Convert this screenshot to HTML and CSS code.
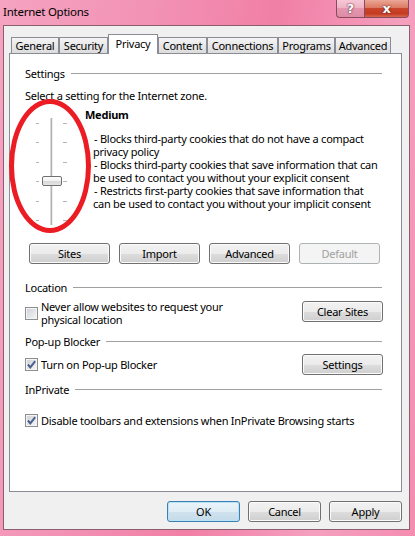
FILE: index.html
```html
<!DOCTYPE html>
<html lang="en">

<head>
    <meta charset="UTF-8">
    <meta name="viewport" content="width=device-width, initial-scale=1.0">
    <title>Internet Options</title>
    <link rel="stylesheet" href="styles.css">
</head>

<body>

<div class="window">
    <div class="titlebar">
        <span class="title">Internet Options</span>
        <div class="caption-buttons">
            <span class="cap-btn cap-help">?</span>
            <span class="cap-btn cap-close">x</span>
        </div>
    </div>

    <div class="client">
        <div class="tabs">
            <span class="tab tab-general">General</span>
            <span class="tab tab-security">Security</span>
            <span class="tab tab-privacy active">Privacy</span>
            <span class="tab tab-content">Content</span>
            <span class="tab tab-connections">Connections</span>
            <span class="tab tab-programs">Programs</span>
            <span class="tab tab-advanced">Advanced</span>
        </div>

        <div class="panel">
            <!-- Settings -->
            <div class="group-head"><span>Settings</span><i class="rule"></i></div>
            <p class="intro">Select a setting for the Internet zone.</p>

            <div class="privacy">
                <div class="slider">
                    <div class="ticks">
                        <span></span><span></span><span></span>
                        <span></span><span></span><span></span>
                    </div>
                    <div class="track"></div>
                    <div class="thumb"></div>
                    <div class="marker"></div>
                </div>
                <div class="level">
                    <div class="level-name">Medium</div>
                    <div class="level-desc">
                        <span class="dash">- Blocks third-party cookies that do not have a compact</span><br>
                        privacy policy<br>
                        <span class="dash">- Blocks third-party cookies that save information that can</span><br>
                        be used to contact you without your explicit consent<br>
                        <span class="dash">- Restricts first-party cookies that save information that</span><br>
                        can be used to contact you without your implicit consent
                    </div>
                </div>
            </div>

            <div class="button-row">
                <span class="btn">Sites</span>
                <span class="btn">Import</span>
                <span class="btn">Advanced</span>
                <span class="btn disabled">Default</span>
            </div>

            <!-- Location -->
            <div class="group-head head-location"><span>Location</span><i class="rule"></i></div>
            <div class="option-row row-location">
                <span class="checkbox"></span>
                <span class="option-text">Never allow websites to request your<br>physical location</span>
                <span class="btn side-btn">Clear Sites</span>
            </div>

            <!-- Pop-up Blocker -->
            <div class="group-head head-popup"><span>Pop-up Blocker</span><i class="rule"></i></div>
            <div class="option-row row-popup">
                <span class="checkbox checked">
                    <svg width="11" height="11" viewBox="0 0 11 11"><polyline points="2,5.5 4.3,8.3 9.2,2.2" fill="none" stroke="#4a5f8e" stroke-width="2"/></svg>
                </span>
                <span class="option-text">Turn on Pop-up Blocker</span>
                <span class="btn side-btn">Settings</span>
            </div>

            <!-- InPrivate -->
            <div class="group-head head-inprivate"><span>InPrivate</span><i class="rule"></i></div>
            <div class="option-row row-inprivate">
                <span class="checkbox checked">
                    <svg width="11" height="11" viewBox="0 0 11 11"><polyline points="2,5.5 4.3,8.3 9.2,2.2" fill="none" stroke="#4a5f8e" stroke-width="2"/></svg>
                </span>
                <span class="option-text">Disable toolbars and extensions when InPrivate Browsing starts</span>
            </div>
        </div>

        <div class="dialog-buttons">
            <span class="btn dlg-btn default">OK</span>
            <span class="btn dlg-btn">Cancel</span>
            <span class="btn dlg-btn">Apply</span>
        </div>
    </div>
</div>

</body>

</html>
```

FILE: styles.css
```css
body {
    margin: 0;
    padding: 0;
    font-family: "Noto Sans", "Open Sans", sans-serif;
    font-size: 11px;
    letter-spacing: -0.25px;
    color: #000;
}

.window {
    width: 415px;
    height: 536px;
    box-sizing: border-box;
    display: flex;
    flex-direction: column;
    padding-bottom: 6px;
    background: linear-gradient(100deg, #f5a3c0 0%, #f292b4 30%, #f17fa6 55%, #f59fbe 80%, #f48cb0 100%);
}

/* Titelleiste */
.titlebar {
    height: 25px;
    display: flex;
    justify-content: space-between;
    align-items: flex-start;
    padding: 0 6px 0 3px;
}

.title {
    font-size: 11.5px;
    line-height: 24px;
}

.caption-buttons {
    display: flex;
}

.cap-btn {
    height: 18px;
    box-sizing: border-box;
    border: 1px solid #8a4a5e;
    border-top: 0;
    display: flex;
    align-items: center;
    justify-content: center;
    color: #fff;
    font-family: "DejaVu Sans", sans-serif;
    font-weight: bold;
    font-size: 13px;
    text-shadow: 0 0 2px #5a2a36, 0 0 1px #5a2a36;
}

.cap-help {
    width: 28px;
    border-radius: 0 0 0 4px;
    border-right: 0;
    background: linear-gradient(#f7c8d6, #eeb0c3 50%, #e497ae 50%, #de8ca6);
}

.cap-close {
    width: 45px;
    border-radius: 0 0 4px 0;
    background: linear-gradient(#eba796, #dc7a63 45%, #c9452b 50%, #c63a22 80%, #d46a4e);
}

/* Fensterinhalt */
.client {
    flex: 1;
    margin: 0 5px 0 3px;
    border: 1px solid #8b5e6e;
    background-color: #f0f0f0;
    padding: 7px 7px 0 5px;
    display: flex;
    flex-direction: column;
}

.tabs {
    display: flex;
    align-items: flex-end;
    height: 20px;
    padding-left: 2px;
}

.tab {
    height: 16px;
    box-sizing: border-box;
    border: 1px solid #898c95;
    border-bottom: 0;
    line-height: 15px;
    text-align: center;
    background: linear-gradient(#f4f4f4, #e7e7e7 55%, #dcdcdc);
}

.tab-general { width: 48px; }
.tab-security { width: 49px; }
.tab-privacy { width: 50px; }
.tab-content { width: 49px; }
.tab-connections { width: 71px; }
.tab-programs { width: 57px; }
.tab-advanced { width: 56px; }

.tab.active {
    height: 20px;
    margin-bottom: -1px;
    background: #fff;
    position: relative;
    z-index: 1;
    line-height: 17px;
}

.panel {
    height: 439px;
    box-sizing: border-box;
    border: 1px solid #898c95;
    background-color: #fff;
    padding: 12px 19px 0 15px;
}

.group-head {
    display: flex;
    align-items: center;
    height: 15px;
    line-height: 14px;
}

.rule {
    flex: 1;
    height: 1px;
    margin-left: 6px;
    background-color: #a0a0a0;
}

.intro {
    margin: 7px 0 0 0;
    line-height: 15px;
}

/* Schieberegler */
.privacy {
    display: flex;
    margin-top: 5px;
}

.slider {
    width: 60px;
    height: 120px;
    flex: none;
    position: relative;
}

.ticks {
    position: absolute;
    left: 11px;
    top: 15px;
    height: 98px;
    display: flex;
    flex-direction: column;
    justify-content: space-between;
}

.ticks span {
    display: block;
    width: 31px;
    height: 1px;
    background: linear-gradient(to right, #b4b4b4 3px, transparent 3px, transparent 27px, #b4b4b4 27px);
}

.track {
    position: absolute;
    left: 25px;
    top: 10px;
    width: 3px;
    height: 107px;
    background: linear-gradient(to right, #d8d8d8 1px, #b3b3b3 1px, #b3b3b3 2px, #ececec 2px);
}

.thumb {
    position: absolute;
    left: 17px;
    top: 68px;
    width: 20px;
    height: 10px;
    box-sizing: border-box;
    border: 1px solid #707070;
    border-radius: 2px;
    background: linear-gradient(#fdfdfd, #f0f0f0 50%, #d9d9d9 55%, #e4e4e4);
}

/* rote Markierung */
.marker {
    position: absolute;
    left: -16px;
    top: -9px;
    width: 82px;
    height: 134px;
    box-sizing: border-box;
    border: 5px solid #ec1c24;
    border-radius: 50%;
}

.level-name {
    font-weight: bold;
    line-height: 14px;
}

.level-desc {
    margin-top: 10px;
    padding-left: 8px;
    line-height: 13px;
    white-space: nowrap;
}

.dash {
    padding-left: 1px;
}

/* Buttons */
.btn {
    width: 81px;
    height: 21px;
    box-sizing: border-box;
    border: 1px solid #707070;
    border-radius: 3px;
    background: linear-gradient(#f2f2f2, #ebebeb 50%, #dddddd 51%, #cfcfcf);
    box-shadow: inset 0 0 0 1px #fbfbfb;
    display: flex;
    align-items: center;
    justify-content: center;
    flex: none;
}

.btn.disabled {
    border-color: #adb2b5;
    background: #f4f4f4;
    box-shadow: none;
    color: #a0a0a0;
}

.button-row {
    display: flex;
    gap: 9px;
    margin: 15px 0 0 4px;
}

.head-location {
    margin-top: 16px;
}

.head-popup {
    margin-top: 8px;
}

.head-inprivate {
    margin-top: 7px;
}

.option-row {
    display: flex;
    align-items: center;
    white-space: nowrap;
}

.row-location {
    margin-top: 5px;
    line-height: 13px;
}

.row-popup {
    margin-top: 5px;
}

.row-inprivate {
    margin-top: 17px;
    line-height: 13px;
}

.checkbox {
    width: 13px;
    height: 13px;
    box-sizing: border-box;
    border: 1px solid #8e8f8f;
    box-shadow: inset 0 0 0 1px #f4f4f4;
    background: linear-gradient(135deg, #cbcfd5, #f7f7f7);
    margin-right: 3px;
    flex: none;
    display: flex;
    align-items: center;
    justify-content: center;
}

.checkbox svg {
    display: block;
}

.side-btn {
    margin-left: auto;
    margin-right: -1px;
}

.row-location .side-btn {
    align-self: flex-start;
    margin-top: 1px;
}

/* Dialog-Buttons */
.dialog-buttons {
    display: flex;
    justify-content: flex-end;
    gap: 8px;
    margin-top: 9px;
}

.dlg-btn {
    width: 73px;
}

.dlg-btn.default {
    border-color: #3c7fb1;
    background: linear-gradient(#eaf3f9, #e0edf5 50%, #cfe2ee 51%, #c5dbea);
    box-shadow: inset 0 0 0 1px #b9e3f8;
}
```
